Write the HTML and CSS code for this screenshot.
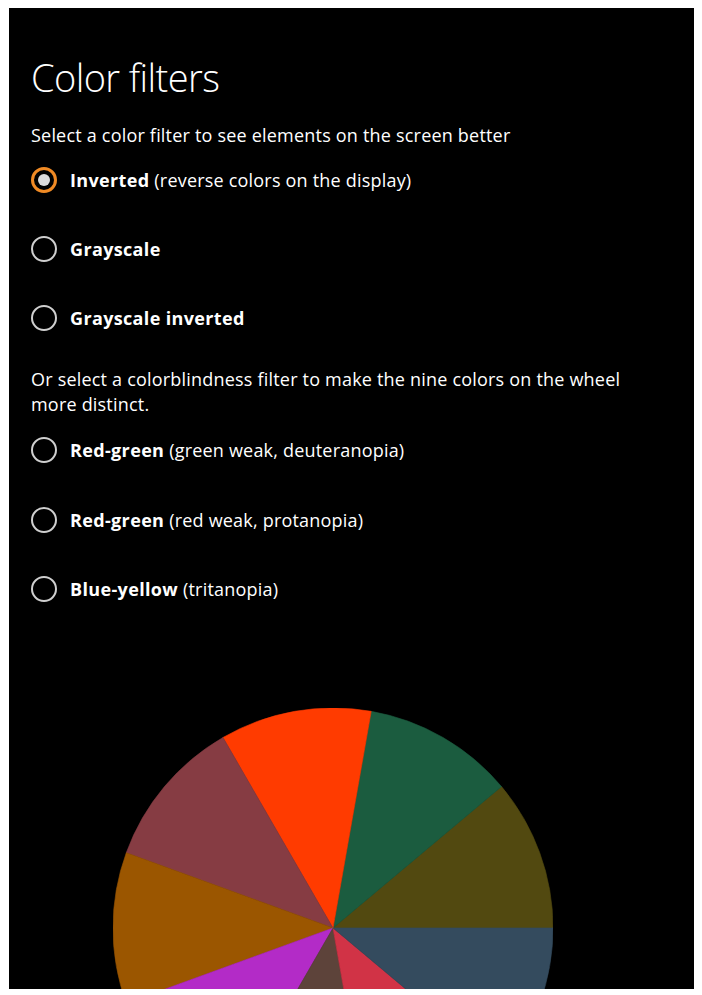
FILE: index.html
```html
<!DOCTYPE html>
<html lang="en">
<head>
<meta charset="utf-8">
<title>Color filters</title>
<link rel="stylesheet" href="styles.css">
</head>
<body>
<main class="panel">
  <h1 class="title">Color filters</h1>
  <p class="intro">Select a color filter to see elements on the screen better</p>
  <ul class="options">
    <li class="option"><span class="radio checked"></span><span class="label"><b>Inverted</b> (reverse colors on the display)</span></li>
    <li class="option"><span class="radio"></span><span class="label"><b>Grayscale</b></span></li>
    <li class="option"><span class="radio"></span><span class="label"><b>Grayscale inverted</b></span></li>
  </ul>
  <p class="intro second">Or select a colorblindness filter to make the nine colors on the wheel more distinct.</p>
  <ul class="options lower">
    <li class="option"><span class="radio"></span><span class="label"><b>Red-green</b> (green weak, deuteranopia)</span></li>
    <li class="option"><span class="radio"></span><span class="label"><b>Red-green</b> (red weak, protanopia)</span></li>
    <li class="option"><span class="radio"></span><span class="label"><b>Blue-yellow</b> (tritanopia)</span></li>
  </ul>
  <svg class="wheel" width="440" height="440" viewBox="0 0 440 440" aria-hidden="true">
    <path fill="#524910" stroke="#524910" d="M220 220 L440 220 A220 220 0 0 0 388.53 78.58 Z"/>
    <path fill="#1b5c3f" stroke="#1b5c3f" d="M220 220 L388.53 78.58 A220 220 0 0 0 258.20 3.34 Z"/>
    <path fill="#ff3b00" stroke="#ff3b00" d="M220 220 L258.20 3.34 A220 220 0 0 0 110 29.47 Z"/>
    <path fill="#863c43" stroke="#863c43" d="M220 220 L110 29.47 A220 220 0 0 0 13.27 144.76 Z"/>
    <path fill="#9b5600" stroke="#9b5600" d="M220 220 L13.27 144.76 A220 220 0 0 0 13.27 295.24 Z"/>
    <path fill="#b32bc7" stroke="#b32bc7" d="M220 220 L13.27 295.24 A220 220 0 0 0 110 410.53 Z"/>
    <path fill="#5d433a" stroke="#5d433a" d="M220 220 L110 410.53 A220 220 0 0 0 258.20 436.66 Z"/>
    <path fill="#d13346" stroke="#d13346" d="M220 220 L258.20 436.66 A220 220 0 0 0 388.53 361.42 Z"/>
    <path fill="#344b5e" stroke="#344b5e" d="M220 220 L388.53 361.42 A220 220 0 0 0 440 220 Z"/>
  </svg>
</main>
</body>
</html>
```
FILE: styles.css
```css
html, body {
  background: #ffffff;
}
body {
  margin: 8px 8px 0 9px;
  font-family: "Open Sans", "Noto Sans", sans-serif;
  color: #ffffff;
}
.panel {
  display: block;
  background: #000000;
  height: 981px;
  overflow: hidden;
  padding: 46px 0 0 22px;
  box-sizing: border-box;
}
.title {
  margin: 0;
  font-size: 38px;
  font-weight: 300;
  line-height: 46px;
  letter-spacing: -0.6px;
}
.intro {
  margin: 23px 0 0 0;
  font-size: 18px;
  line-height: 25px;
  letter-spacing: 0.2px;
  max-width: 610px;
}
.intro.second {
  margin-top: 36px;
}
.options {
  list-style: none;
  margin: 19px 0 0 0;
  padding: 0;
  display: flex;
  flex-direction: column;
  gap: 43px;
}
.options.lower {
  margin-top: 20px;
  gap: 43.5px;
}
.option {
  display: flex;
  align-items: center;
  gap: 13px;
  height: 26px;
  font-size: 18px;
  letter-spacing: 0.2px;
}
.radio {
  width: 26px;
  height: 26px;
  box-sizing: border-box;
  border: 2px solid #cfcfcf;
  border-radius: 50%;
  display: flex;
  align-items: center;
  justify-content: center;
  flex: none;
}
.radio.checked {
  border: 3px solid #f08a24;
}
.radio.checked::after {
  content: "";
  width: 12px;
  height: 12px;
  border-radius: 50%;
  background: #dcdcdc;
}
.label b {
  font-weight: 700;
  letter-spacing: 0.35px;
}
.wheel {
  display: block;
  margin: 106px 0 0 82px;
}
.wheel path {
  stroke-width: 0.6;
}
```
